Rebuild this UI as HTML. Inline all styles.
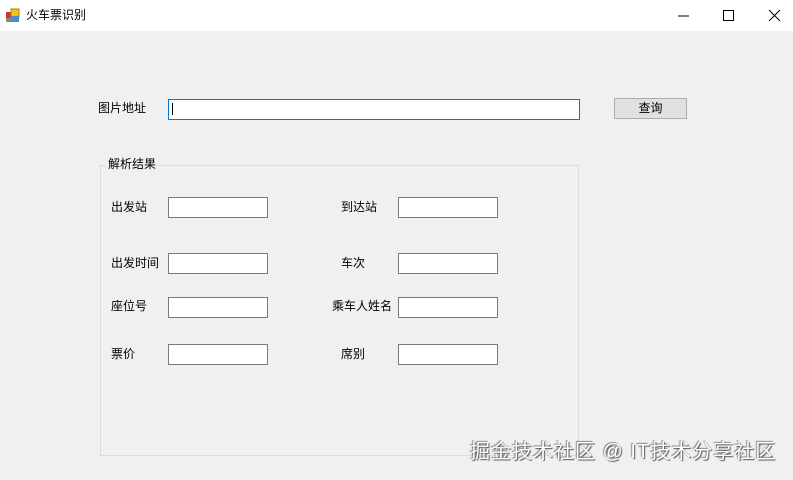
<!DOCTYPE html><html><head><meta charset="utf-8"><style>
body{margin:0;width:793px;height:480px;background:#f0f0f0;position:relative;overflow:hidden;font-family:"Liberation Sans","Noto Sans CJK SC",sans-serif;font-size:12px;color:#000}
.a{position:absolute}
.tb{position:absolute;background:#fff;border:1px solid #7a7a7a;box-sizing:border-box;width:100px;height:21px}
.l{position:absolute;line-height:14px}
</style></head><body>
<div class="a" style="left:0;top:0;width:793px;height:31px;background:#fff"></div>
<svg class="a" style="left:5px;top:8px" width="16" height="16"><rect x="1" y="4" width="6" height="6" fill="#c33"/><rect x="6" y="1" width="8" height="8" fill="#f0c020" stroke="#a80" /><rect x="6" y="8" width="8" height="6" fill="#4a8ad8"/><rect x="1" y="10" width="5" height="4" fill="#888"/></svg>
<div class="l" style="left:26px;top:8px">火车票识别</div>
<svg class="a" style="left:678px;top:9px" width="110" height="14"><line x1="0" y1="7" x2="11" y2="7" stroke="#000"/><rect x="45.5" y="1.5" width="10" height="10" fill="none" stroke="#000"/><path d="M91 1L102 12M102 1L91 12" stroke="#000"/></svg>
<div class="l" style="left:98px;top:101px">图片地址</div>
<div class="tb" style="left:168px;top:99px;width:412px;height:21px;border-color:#0078d7"></div>
<div class="a" style="left:172px;top:103px;width:1px;height:12px;background:#000"></div>
<div class="a" style="left:614px;top:98px;width:73px;height:21px;background:#e1e1e1;border:1px solid #adadad;box-sizing:border-box;text-align:center;line-height:19px">查询</div>
<div class="a" style="left:100px;top:165px;width:479px;height:291px;border:1px solid #dcdcdc;box-sizing:border-box"></div>
<div class="l" style="left:106px;top:157px;background:#f0f0f0;padding:0 2px">解析结果</div>
<div class="l" style="left:111px;top:200px">出发站</div><div class="tb" style="left:168px;top:197px"></div>
<div class="l" style="left:341px;top:200px">到达站</div><div class="tb" style="left:398px;top:197px"></div>
<div class="l" style="left:111px;top:256px">出发时间</div><div class="tb" style="left:168px;top:253px"></div>
<div class="l" style="left:341px;top:256px">车次</div><div class="tb" style="left:398px;top:253px"></div>
<div class="l" style="left:111px;top:299px">座位号</div><div class="tb" style="left:168px;top:297px"></div>
<div class="l" style="left:332px;top:299px">乘车人姓名</div><div class="tb" style="left:398px;top:297px"></div>
<div class="l" style="left:111px;top:347px">票价</div><div class="tb" style="left:168px;top:344px"></div>
<div class="l" style="left:341px;top:347px">席别</div><div class="tb" style="left:398px;top:344px"></div>
<div class="a" style="left:470px;top:440px;font-size:20px;line-height:24px;letter-spacing:1px;color:#fff;text-shadow:1px 1px 1px #555,-1px -1px 1px #888;white-space:nowrap">掘金技术社区 @ IT技术分享社区</div>
</body></html>
